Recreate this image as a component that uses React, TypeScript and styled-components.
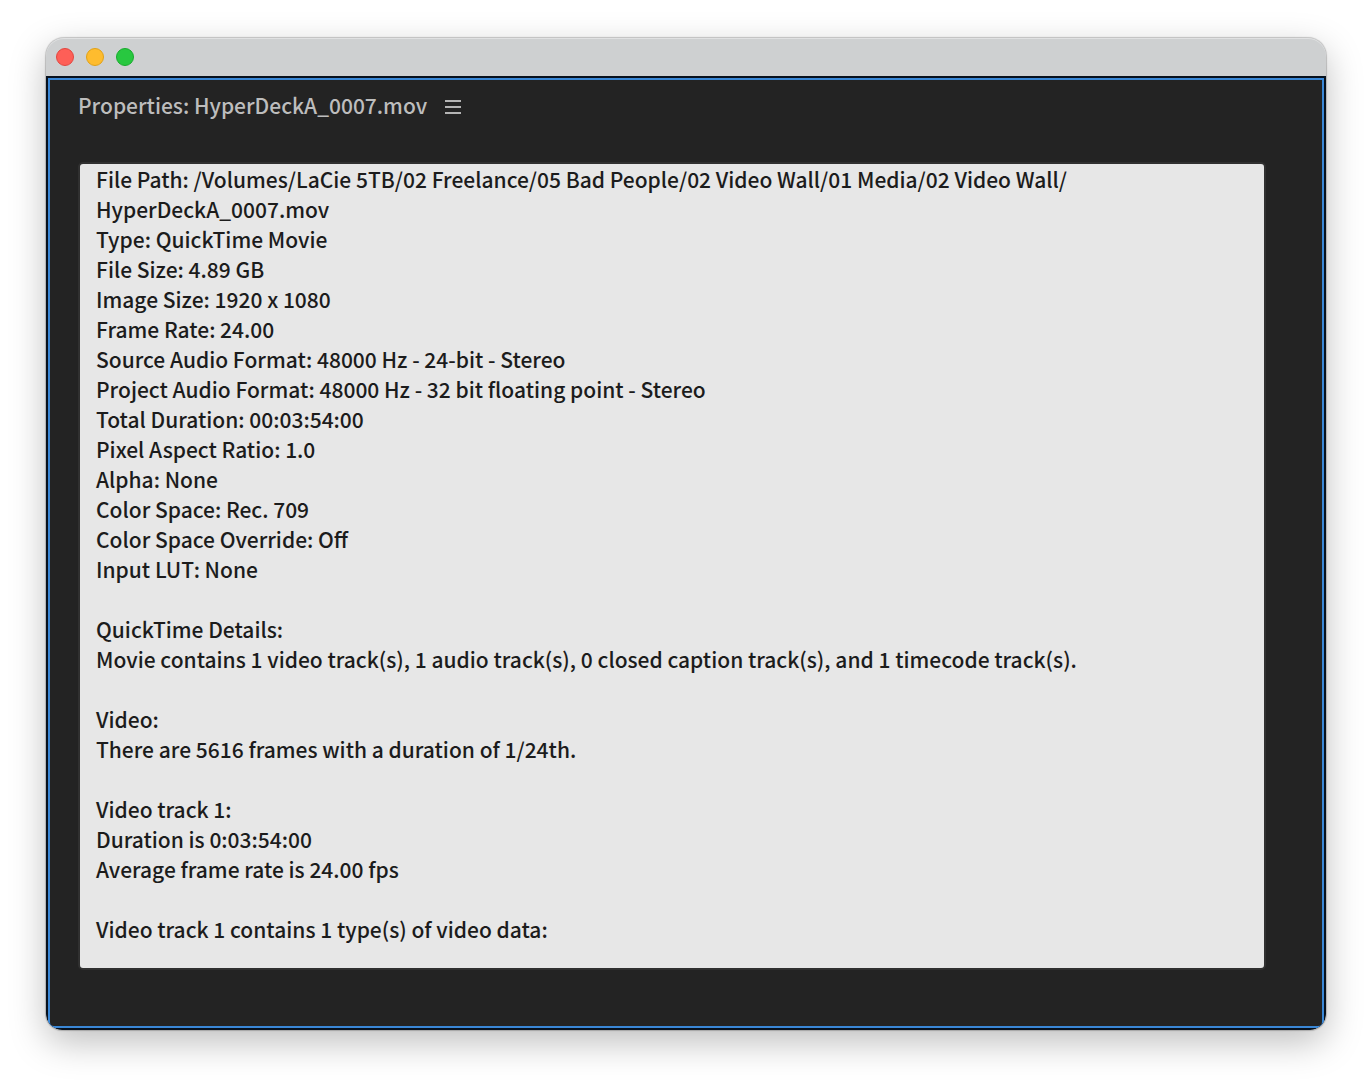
import React from "react";
import styled, { createGlobalStyle } from "styled-components";

const GlobalStyle = createGlobalStyle`
  *, *::before, *::after { box-sizing: border-box; }
  body {
    margin: 0;
    background: #ffffff;
    font-family: "Noto Sans CJK SC", "Noto Sans", sans-serif;
  }
`;

const Desktop = styled.main`
  display: flex;
  min-height: 100vh;
  padding: 38px 46px 54px;
`;

const Window = styled.section`
  display: flex;
  flex: 1;
  flex-direction: column;
  min-width: 0;
  border-radius: 18px 18px 16px 16px;
  overflow: hidden;
  background: #ced0d1;
  box-shadow:
    0 0 1px 1px rgba(0, 0, 0, 0.2),
    0 12px 36px rgba(0, 0, 0, 0.26);
`;

const TitleBar = styled.header`
  display: flex;
  align-items: center;
  gap: 12px;
  height: 38px;
  padding: 0 10px;
  border-radius: 18px 18px 0 0;
  background: #ced0d1;
  box-shadow: inset 0 1px 0 #e0e1e2;
`;

const WindowButton = styled.button<{ $fill: string; $edge: string }>`
  width: 18px;
  height: 18px;
  padding: 0;
  border: 1px solid ${(p) => p.$edge};
  border-radius: 50%;
  background: ${(p) => p.$fill};
`;

const Frame = styled.div`
  display: flex;
  flex: 1;
  padding: 2px;
  border-radius: 0 0 16px 16px;
  overflow: hidden;
  background: #07111d;
`;

const Panel = styled.div`
  display: flex;
  flex: 1;
  flex-direction: column;
  min-width: 0;
  padding: 8px 56px 56px 28px;
  border: 2px solid #3a87d6;
  border-radius: 0 0 6px 6px;
  background: #232323;
`;

const PanelHeader = styled.div`
  display: flex;
  align-items: center;
  gap: 18px;
  height: 38px;
  margin-bottom: 36px;
`;

const PanelTitle = styled.h1`
  margin: 0;
  padding-bottom: 4px;
  color: #bdbdbd;
  font-size: 21px;
  font-weight: 500;
  line-height: 30px;
`;

const MenuButton = styled.button`
  display: flex;
  padding: 0;
  border: 0;
  background: none;
  color: #b4b4b4;
`;

const Details = styled.div`
  flex: 1;
  padding: 0 16px;
  border: 2px solid #303030;
  border-radius: 5px;
  background: #e7e7e7;
  color: #1c1c1c;
  font-size: 21px;
  font-weight: 500;
  line-height: 30px;
`;

const Group = styled.section`
  & + & {
    margin-top: 30px;
  }
`;

const Line = styled.p`
  margin: 0;
`;

const groups: React.ReactNode[][] = [
  [
    <>
      File Path: /Volumes/LaCie 5TB/02 Freelance/05 Bad People/02 Video Wall/01 Media/02 Video Wall/
      <wbr />
      HyperDeckA_0007.mov
    </>,
    "Type: QuickTime Movie",
    "File Size: 4.89 GB",
    "Image Size: 1920 x 1080",
    "Frame Rate: 24.00",
    "Source Audio Format: 48000 Hz - 24-bit - Stereo",
    "Project Audio Format: 48000 Hz - 32 bit floating point - Stereo",
    "Total Duration: 00:03:54:00",
    "Pixel Aspect Ratio: 1.0",
    "Alpha: None",
    "Color Space: Rec. 709",
    "Color Space Override: Off",
    "Input LUT: None",
  ],
  [
    "QuickTime Details:",
    "Movie contains 1 video track(s), 1 audio track(s), 0 closed caption track(s), and 1 timecode track(s).",
  ],
  ["Video:", "There are 5616 frames with a duration of 1/24th."],
  ["Video track 1:", "Duration is 0:03:54:00", "Average frame rate is 24.00 fps"],
  ["Video track 1 contains 1 type(s) of video data:"],
];

export default function App() {
  return (
    <>
      <GlobalStyle />
      <Desktop>
        <Window>
          <TitleBar>
            <WindowButton type="button" aria-label="Close" $fill="#fe5f57" $edge="#e2463f" />
            <WindowButton type="button" aria-label="Minimize" $fill="#febc2e" $edge="#e1a116" />
            <WindowButton type="button" aria-label="Zoom" $fill="#28c840" $edge="#17ab2c" />
          </TitleBar>
          <Frame>
            <Panel>
              <PanelHeader>
                <PanelTitle>Properties: HyperDeckA_0007.mov</PanelTitle>
                <MenuButton type="button" aria-label="Panel menu">
                  <svg width="16" height="14" viewBox="0 0 16 14" fill="currentColor" aria-hidden="true">
                    <path d="M0 0h16v2H0zM0 6h16v2H0zM0 12h16v2H0z" />
                  </svg>
                </MenuButton>
              </PanelHeader>
              <Details>
                {groups.map((lines, g) => (
                  <Group key={g}>
                    {lines.map((line, i) => (
                      <Line key={i}>{line}</Line>
                    ))}
                  </Group>
                ))}
              </Details>
            </Panel>
          </Frame>
        </Window>
      </Desktop>
    </>
  );
}
